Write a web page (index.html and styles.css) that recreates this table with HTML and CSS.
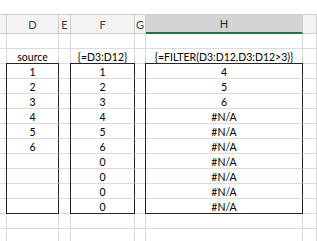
FILE: index.html
```html
<!DOCTYPE html>
<html lang="en">
<head>
    <meta charset="UTF-8">
    <title>Sheet1</title>
    <link rel="stylesheet" href="styles.css">
</head>
<body>
    <div class="sheet" id="sheet">
        <!-- cells are written by the script below -->
    </div>
    <script>
        const cols = ['C', 'D', 'E', 'F', 'G', 'H', 'I'];
        const rows = [
            ['', '', '', '', '', '', ''],
            ['', 'source', '', '{=D3:D12}', '', '{=FILTER(D3:D12,D3:D12>3)}', ''],
            ['', '1', '', '1', '', '4', ''],
            ['', '2', '', '2', '', '5', ''],
            ['', '3', '', '3', '', '6', ''],
            ['', '4', '', '4', '', '#N/A', ''],
            ['', '5', '', '5', '', '#N/A', ''],
            ['', '6', '', '6', '', '#N/A', ''],
            ['', '', '', '0', '', '#N/A', ''],
            ['', '', '', '0', '', '#N/A', ''],
            ['', '', '', '0', '', '#N/A', ''],
            ['', '', '', '0', '', '#N/A', ''],
            ['', '', '', '', '', '', ''],
            ['', '', '', '', '', '', '']
        ];
        // D3:D12, F3:F12 and H3:H12 have a thin outline
        const boxedCols = ['D', 'F', 'H'];

        const sheet = document.getElementById('sheet');

        cols.forEach(name => {
            const th = document.createElement('div');
            th.className = 'head' + (name === 'H' ? ' selected' : '');
            th.textContent = name === 'C' || name === 'I' ? '' : name;
            sheet.appendChild(th);
        });

        rows.forEach((row, r) => {
            const rowNum = r + 1;
            row.forEach((value, c) => {
                const td = document.createElement('div');
                td.className = 'cell';
                if (boxedCols.includes(cols[c]) && rowNum >= 3 && rowNum <= 12) {
                    td.classList.add('boxed');
                    if (rowNum === 3) td.classList.add('box-top');
                    if (rowNum === 12) td.classList.add('box-bottom');
                }
                td.textContent = value;
                sheet.appendChild(td);
            });
        });
    </script>
</body>
</html>
```

FILE: styles.css
```css
body {
    margin: 0;
    background: #fff;
    font-family: Lato, "Liberation Sans", sans-serif;
    font-size: 10.5px;
    color: #000;
    overflow: hidden;
}
.sheet {
    display: grid;
    grid-template-columns: 7px 52px 12px 64px 11px 157px 14px;
    grid-template-rows: 20px repeat(14, 15px);
    margin-top: 14px;
}
.head, .cell {
    box-sizing: border-box;
    border-right: 1px solid #d9d9d9;
    border-bottom: 1px solid #dcdcdc;
    display: flex;
    align-items: center;
    justify-content: center;
    white-space: nowrap;
}
.head {
    background: #f3f3f3;
    border-top: 1px solid #d0d0d0;
    border-right-color: #cfcfcf;
    border-bottom-color: #cfcfcf;
    color: #444;
    font-size: 11px;
}
.head.selected {
    background: #d4d4d4;
    border-bottom: 2px solid #217346;
    color: #262626;
}
.cell {
    padding-top: 1px;
}
.boxed {
    border-right-color: #262626;
    box-shadow: -1px 0 0 #262626;
}
.boxed.box-top {
    box-shadow: -1px 0 0 #262626, -1px -1px 0 #262626, 0 -1px 0 #262626;
}
.boxed.box-bottom {
    border-bottom-color: #262626;
}
```
